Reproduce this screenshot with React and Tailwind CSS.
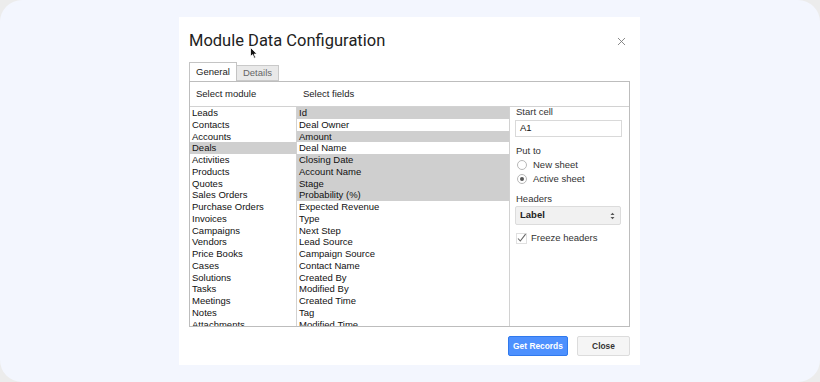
import { X } from "lucide-react";

const modules = [
  "Leads", "Contacts", "Accounts", "Deals", "Activities", "Products", "Quotes",
  "Sales Orders", "Purchase Orders", "Invoices", "Campaigns", "Vendors",
  "Price Books", "Cases", "Solutions", "Tasks", "Meetings", "Notes", "Attachments",
];

const fields = [
  { name: "Id", on: true },
  { name: "Deal Owner" },
  { name: "Amount", on: true },
  { name: "Deal Name" },
  { name: "Closing Date", on: true },
  { name: "Account Name", on: true },
  { name: "Stage", on: true },
  { name: "Probability (%)", on: true },
  { name: "Expected Revenue" },
  { name: "Type" },
  { name: "Next Step" },
  { name: "Lead Source" },
  { name: "Campaign Source" },
  { name: "Contact Name" },
  { name: "Created By" },
  { name: "Modified By" },
  { name: "Created Time" },
  { name: "Tag" },
  { name: "Modified Time" },
];

const Row = ({ label, on }) => (
  <div
    className={`h-[11.75px] shrink-0 pl-[2px] leading-[11.75px] whitespace-nowrap ${
      on ? "bg-[#cfcfcf]" : ""
    }`}
  >
    {label}
  </div>
);

const Radio = ({ label, checked }) => (
  <div className="flex items-center h-[11px] pl-[1px]">
    <span className="w-[10px] h-[10px] rounded-full border border-[#b8b8b8] bg-white flex items-center justify-center">
      {checked && <span className="w-[4px] h-[4px] rounded-full bg-[#555]" />}
    </span>
    <span className="ml-[6px] text-[#333]">{label}</span>
  </div>
);

const App = () => {
  return (
    <div className="w-[820px] h-[382px] bg-[#ececec]">
      <div
        className="w-full h-full rounded-[22px] bg-[#f3f6fe] pl-[179px] pt-[17px]"
        style={{ fontFamily: '"Liberation Sans", Arial, sans-serif' }}
      >
        {/* DIALOG */}
        <div className="relative w-[461px] h-[348px] bg-white px-[10px] flex flex-col">
          {/* HEADER */}
          <div className="flex items-center justify-between mt-[12px] h-[24px]">
            <h1
              className="text-[16.5px] text-[#222]"
              style={{ fontFamily: "Roboto, Arial, sans-serif" }}
            >
              Module Data Configuration
            </h1>
            <X size={13} strokeWidth={1.6} className="text-[#777] mr-[2px]" />
          </div>

          {/* cursor */}
          <svg
            className="absolute left-[71px] top-[30px]"
            width="8"
            height="12"
            viewBox="0 0 8 12"
          >
            <path d="M0.5 0.5 L0.5 9.5 L2.6 7.6 L4.2 11.2 L5.6 10.6 L4.1 7.1 L7 7.1 Z" fill="#111" stroke="#fff" strokeWidth="0.8" />
          </svg>

          {/* TABS */}
          <div className="flex items-end mt-[10px] h-[18px] text-[9.5px] relative z-10">
            <div className="h-[19px] w-[48px] border border-b-0 border-[#c4c4c4] bg-white flex items-center justify-center pt-[1px] text-[#222]">
              General
            </div>
            <div className="h-[16px] w-[42px] border border-l-0 border-[#c9c9c9] bg-[#e9e9e9] flex items-center justify-center text-[#666]">
              Details
            </div>
          </div>

          {/* PANEL */}
          <div className="w-[441px] h-[246px] border border-[#bdbdbd] flex flex-col text-[9.5px] text-[#111] overflow-hidden">
            <div className="h-[24px] shrink-0 flex items-center text-[#222]">
              <span className="w-[107px] pl-[6px]">Select module</span>
              <span className="pl-[6px]">Select fields</span>
            </div>
            <div className="flex flex-1 min-h-0 border-t border-[#d2d2d2]">
              <div className="w-[107px] border-r border-[#d2d2d2] flex flex-col overflow-hidden">
                {modules.map((m) => (
                  <Row key={m} label={m} on={m === "Deals"} />
                ))}
              </div>
              <div className="w-[213px] border-r border-[#d2d2d2] flex flex-col overflow-hidden">
                {fields.map((f) => (
                  <Row key={f.name} label={f.name} on={f.on} />
                ))}
              </div>

              {/* OPTIONS */}
              <div className="flex-1 pl-[6px] pr-[6px] flex flex-col text-[#333] -mt-[1px]">
                <div className="h-[11px] leading-[11px]">Start cell</div>
                <div className="mt-[3px] h-[17px] w-[107px] -ml-[1px] border border-[#d9d9d9] flex items-center pl-[4px] text-[#111]">
                  A1
                </div>
                <div className="mt-[7.5px] h-[11px] leading-[11px]">Put to</div>
                <div className="mt-[4px]">
                  <Radio label="New sheet" />
                </div>
                <div className="mt-[3px]">
                  <Radio label="Active sheet" checked />
                </div>
                <div className="mt-[8px] h-[11px] leading-[11px]">Headers</div>
                <div className="mt-[2.5px] h-[19px] w-[106px] -ml-[1px] rounded-[2px] border border-[#dcdcdc] bg-[#f1f1f1] flex items-center justify-between pl-[4px] pr-[5px]">
                  <span className="font-bold text-[#222]">Label</span>
                  <svg width="5" height="8" viewBox="0 0 5 8">
                    <path d="M0.5 3 L2.5 0.8 L4.5 3 Z M0.5 5 L2.5 7.2 L4.5 5 Z" fill="#555" />
                  </svg>
                </div>
                <div className="mt-[7.5px] flex items-center h-[11px]">
                  <svg width="11" height="11" viewBox="0 0 11 11">
                    <rect x="0.5" y="0.5" width="10" height="10" fill="#fff" stroke="#e0e0e0" />
                    <path d="M2 5.5 L4.3 8 L9.6 1.2" fill="none" stroke="#666" strokeWidth="1.1" />
                  </svg>
                  <span className="ml-[4px]">Freeze headers</span>
                </div>
              </div>
            </div>
          </div>

          {/* FOOTER */}
          <div className="flex justify-end gap-[9px] mt-[9px]">
            <button className="w-[60px] h-[20px] rounded-[2px] border border-[#3079ed] bg-[#4d90fe] text-white font-bold text-[8.4px]">
              Get Records
            </button>
            <button className="w-[53px] h-[20px] rounded-[2px] border border-[#dcdcdc] bg-[#f5f5f5] text-[#333] font-bold text-[8.4px]">
              Close
            </button>
          </div>
        </div>
      </div>
    </div>
  );
};

export default App;
